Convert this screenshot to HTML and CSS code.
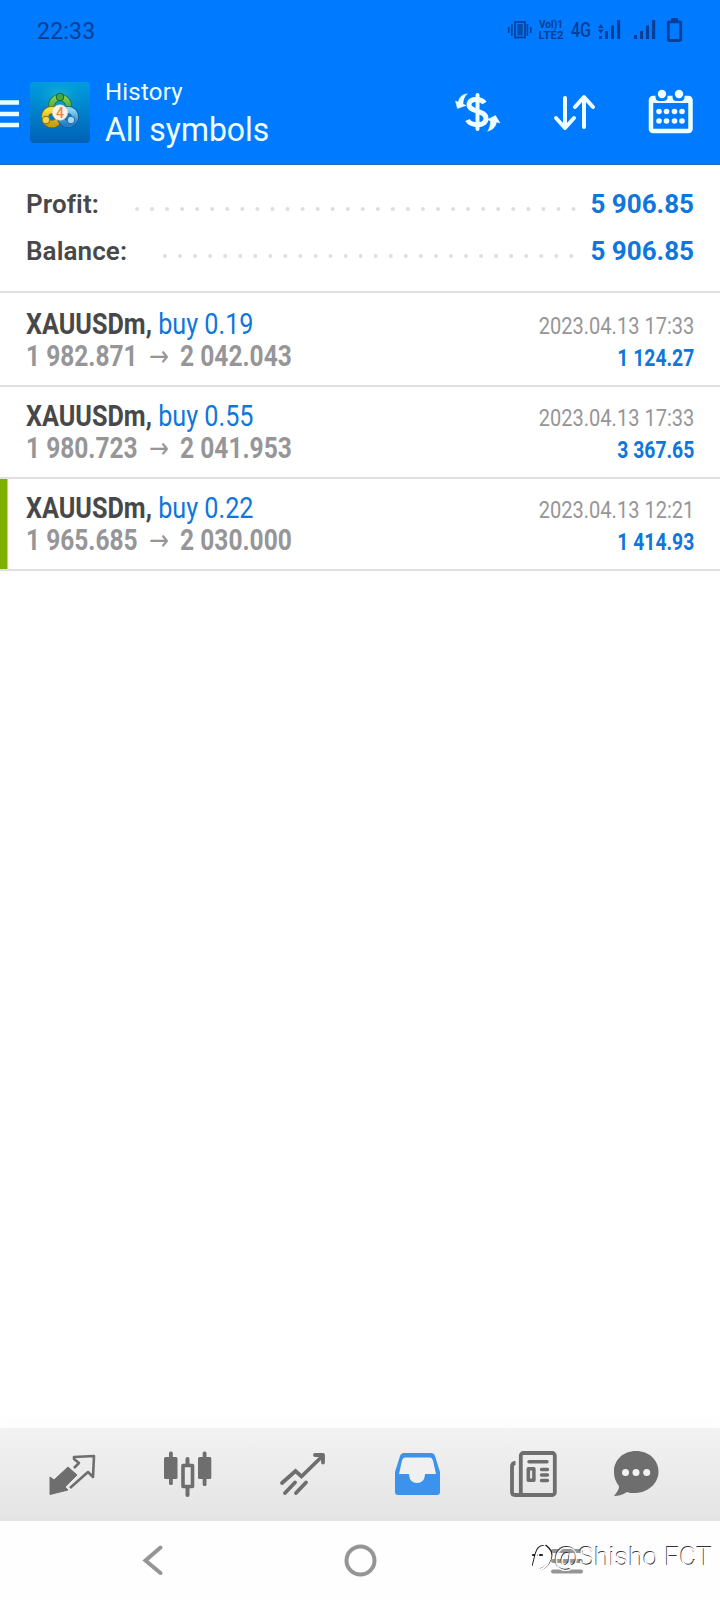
FILE: index.html
```html
<!DOCTYPE html>
<html lang="en">
<head>
<meta charset="utf-8">
<title>History</title>
<link rel="stylesheet" href="styles.css">
</head>
<body>
<header class="header">
  <div class="status">
    <span class="clock">22:33</span>
    <svg class="status-icons" width="186" height="40" viewBox="500 10 186 40" fill="#083f94">
      <g><rect x="508" y="27" width="1.5" height="6"/><rect x="511" y="24" width="1.6" height="12"/><rect x="526.6" y="24" width="1.6" height="12"/><rect x="530" y="27" width="1.5" height="6"/>
      <rect x="515" y="22" width="10" height="15.5" fill="none" stroke="#083f94" stroke-width="1.6"/><rect x="517.3" y="24" width="5.4" height="11.5" opacity=".75"/></g>
      <g font-family="Roboto, sans-serif" font-weight="700" font-size="11.5"><text x="539" y="28" textLength="24" lengthAdjust="spacingAndGlyphs">Vol)1</text><text x="538.5" y="39" textLength="25" lengthAdjust="spacingAndGlyphs">LTE2</text></g>
      <text x="571" y="37" font-family="Roboto, sans-serif" font-weight="500" font-size="20.5" textLength="20" lengthAdjust="spacingAndGlyphs">4G</text>
      <path d="M598 28l2.8-4 2.8 4zM598 29.5l2.8 4 2.8-4zM599 36h3v3h-3zM605 31h3v8h-3zM611 25.500h3v13.500h-3zM617 20h3.200v19h-3.200zM634 35h3v4h-3zM640 31h3v8h-3zM646 25.500h3v13.500h-3zM652 20h3.200v19h-3.200zM671 18h7v3h-7z"/>
      <rect x="668.3" y="21.800" width="12.400" height="18.700" rx="1" fill="none" stroke="#083f94" stroke-width="2.8"/>
    </svg>
  </div>
  <div class="appbar">
    <svg class="menu" width="19" height="28" viewBox="0 0 19 28"><path d="M0 2.500h19M0 14h19M0 25h19" stroke="#e8ffff" stroke-width="4.400"/></svg>
    <svg class="logo" width="60" height="61" viewBox="0 0 60 61">
      <defs>
        <linearGradient id="sea" x1="0" y1="0" x2="0" y2="1"><stop offset="0" stop-color="#009cdf"/><stop offset=".55" stop-color="#007dc9"/><stop offset="1" stop-color="#0060b5"/></linearGradient>
        <radialGradient id="glow"><stop offset="0" stop-color="#21c4d2"/><stop offset="1" stop-color="#0090d5" stop-opacity="0"/></radialGradient>
        <linearGradient id="green" x1="0" y1="0" x2="0" y2="1"><stop offset="0" stop-color="#80ce4e"/><stop offset="1" stop-color="#258e3d"/></linearGradient>
        <linearGradient id="gold" x1="0" y1="0" x2="0" y2="1"><stop offset="0" stop-color="#f5e23c"/><stop offset="1" stop-color="#c99e13"/></linearGradient>
        <linearGradient id="blue" x1="0" y1="0" x2="0" y2="1"><stop offset="0" stop-color="#8bd3f5"/><stop offset="1" stop-color="#237fc9"/></linearGradient>
      </defs>
      <rect width="60" height="61" rx="4" fill="url(#sea)"/>
      <ellipse cx="29" cy="13" rx="29" ry="20" fill="url(#glow)" opacity=".65"/>
      <g fill="none" stroke-linecap="round">
        <circle cx="30" cy="24" r="8.500" stroke="#176a43" stroke-width="7"/><circle cx="30" cy="24" r="8.500" stroke="url(#green)" stroke-width="5.500"/>
        <circle cx="22" cy="35" r="7" stroke="#756b26" stroke-width="8"/><circle cx="22" cy="35" r="7" stroke="url(#gold)" stroke-width="6.500"/>
        <circle cx="38" cy="35" r="7" stroke="#175b91" stroke-width="8"/><circle cx="38" cy="35" r="7" stroke="url(#blue)" stroke-width="6.500"/>
      </g>
      <circle cx="30" cy="15" r="3.800" fill="#45a83f" stroke="#16653a"/><circle cx="16" cy="38" r="3.800" fill="#f1d94b" stroke="#82701b"/><circle cx="41" cy="38" r="3.800" fill="#a0daf5" stroke="#2265a5"/>
      <circle cx="30" cy="30.500" r="7.800" fill="#fff2e6" stroke="#d9c6ad" stroke-width=".6"/>
      <text x="30" y="35.500" text-anchor="middle" font-family="Roboto, sans-serif" font-weight="500" font-size="14" fill="#e98743">4</text>
    </svg>
    <div class="titles"><div class="title">History</div><div class="subtitle">All symbols</div></div>
    <svg class="actions" width="250" height="60" viewBox="450 80 250 60" fill="none" stroke="#efffff" stroke-linecap="round" stroke-linejoin="round">
      <path d="M477.500 95v34" stroke-width="4"/>
      <path d="M484.500 103c-2.500-4-15-6-15.500 1.500s17 5.500 17 14-15.500 7.500-18.500 1.500" stroke-width="5" stroke-linecap="butt"/>
      <path d="M467 94c-5 0-8 4-8.500 8l-3-1 2 7.500 8.500-3-3-1.500c0-4 1-7 4-10z" fill="#efffff" stroke-width=".5"/>
      <path d="M488 131c5-1 8-5 8.500-9l3.500 1-4.500-7.500-8 4 3 1.500c0 4-1 7-2.500 10z" fill="#efffff" stroke-width=".5"/>
      <path d="M565 98v30M556 118l9 10 9-10M584 127V98M575 107l9-10 9 10" stroke-width="4"/>
      <rect x="651" y="98" width="39.500" height="33" rx="2" stroke-width="4.500"/>
      <path d="M651 99h39v4h-39z" fill="#efffff" stroke="none"/>
      <path d="M656 95v3q0 4 4 4h4q4 0 4-4v-3zM673 95v3q0 4 4 4h4q4 0 4-4v-3z" fill="#007aff" stroke="none" transform="translate(-.500 -1)"/>
      <g fill="#efffff" stroke="none"><circle cx="662" cy="94" r="4.200"/><circle cx="679" cy="94" r="4.200"/>
      <circle cx="659" cy="111.500" r="2.800"/><circle cx="666.500" cy="111.500" r="2.800"/><circle cx="674.500" cy="111.500" r="2.800"/><circle cx="682" cy="111.500" r="2.800"/>
      <circle cx="659" cy="121" r="2.800"/><circle cx="666.500" cy="121" r="2.800"/><circle cx="674.500" cy="121" r="2.800"/><circle cx="682" cy="121" r="2.800"/></g>
    </svg>
  </div>
</header>
<main class="content">
  <section class="summary">
    <div class="sum-row"><span class="sum-label">Profit:</span><svg class="dots" width="442" height="6"><path d="M3 3H441" /></svg><span class="sum-value">5 906.85</span></div>
    <div class="sum-row"><span class="sum-label">Balance:</span><svg class="dots dots-balance" width="412" height="6"><path d="M3 3H411" /></svg><span class="sum-value">5 906.85</span></div>
  </section>
  <article class="deal deal-first">
    <div class="deal-info"><div class="symbol"><b>XAUUSDm,</b> <span>buy 0.19</span></div><div class="prices">1 982.871<span class="arrow">→</span>2 042.043</div></div>
    <div class="deal-result"><div class="date">2023.04.13 17:33</div><div class="profit">1 124.27</div></div>
  </article>
  <article class="deal">
    <div class="deal-info"><div class="symbol"><b>XAUUSDm,</b> <span>buy 0.55</span></div><div class="prices">1 980.723<span class="arrow">→</span>2 041.953</div></div>
    <div class="deal-result"><div class="date">2023.04.13 17:33</div><div class="profit">3 367.65</div></div>
  </article>
  <article class="deal deal-marked">
    <div class="deal-info"><div class="symbol"><b>XAUUSDm,</b> <span>buy 0.22</span></div><div class="prices">1 965.685<span class="arrow">→</span>2 030.000</div></div>
    <div class="deal-result"><div class="date">2023.04.13 12:21</div><div class="profit">1 414.93</div></div>
  </article>
</main>
<nav class="tabs">
  <svg width="720" height="93" viewBox="0 1428 720 93" fill="none" stroke="#6e6e6e" stroke-linejoin="round">
    <path d="M68 1467l9 8-12 12 3 3-18 4.500v-17.500l4 3z" fill="#6e6e6e" stroke="#6e6e6e" stroke-width="1"/><path d="M74 1468l5-5-5-4v-2l20-1-1 21-5-5L70 1488" stroke-width="2.600"/>
    <g fill="#6e6e6e" stroke="none"><rect x="164" y="1457" width="13.500" height="22" rx="1.500"/><rect x="169" y="1451.500" width="3.800" height="33.500" rx="1.500"/><rect x="198" y="1457" width="13.300" height="22" rx="1.500"/><rect x="202.700" y="1451.500" width="3.800" height="34.500" rx="1.500"/></g>
    <path d="M187.500 1459v6M187.500 1488v7" stroke-width="4" stroke-linecap="round"/><rect x="183" y="1465.500" width="9.500" height="21" stroke-width="3.600"/>
    <path d="M282 1483l13.500-12 6 5.500 21-20.500M285 1493l10-10.500M296 1493l10-10.500" stroke-width="3.800" stroke-linecap="round" stroke-linejoin="miter"/><path d="M315 1455h8v7.500" stroke-width="3.800" stroke-linecap="round"/>
    <path d="M404 1453h27q3 0 4 3l5 16v20q0 3-3 3h-39q-3 0-3-3v-20l5-16q1-3 4-3z" fill="#3c93ee" stroke="none"/><path d="M405 1457.500h25q2 0 3 3l3 13.500h-11v1q-1 8-8 8t-8-8v-1h-10l3-13.500q1-3 3-3z" fill="#f0f0f0" stroke="none"/>
    <rect x="520.800" y="1453" width="34" height="42" rx="2.500" stroke-width="3.800"/><path d="M515.500 1463q-3.500 0-3.500 4v25q0 3 3 3h9" stroke-width="3.800"/><path d="M529 1461.800h18M541.500 1469.500h6M541.500 1475h6M541.500 1480.500h6" stroke-width="3.400" stroke-linecap="round"/><rect x="528.300" y="1468.700" width="5.600" height="11.500" stroke-width="3.500"/>
    <path d="M636 1451c13 0 22.500 9 22.500 20.500S649 1492 636 1493c-5 0-7 0-9-1-5 3-9 4-13 4 3-4 5-6 5-10-3-4-5-8-5-14.500 0-11.500 9-20.500 22-20.500z" fill="#6e6e6e" stroke="none"/><g fill="#f2f2f2" stroke="none"><circle cx="625.500" cy="1472.500" r="3.500"/><circle cx="636" cy="1472.500" r="3.500"/><circle cx="646.700" cy="1472.500" r="3.500"/></g>
  </svg>
</nav>
<footer class="system">
  <svg width="720" height="79" viewBox="0 1521 720 79" fill="none" stroke="#959595" stroke-width="4">
    <path d="M160.500 1547.500L145.500 1560.500l15 12.500" stroke-linecap="round"/><circle cx="360.500" cy="1560.500" r="14" stroke-width="4"/>
    <path d="M553 1551h28M553 1561h28M553 1571.500h28" stroke-linecap="round"/>
  </svg>
  <div class="watermark"><svg width="22" height="30" viewBox="532 1544 22 30" fill="none" stroke-linecap="round"><path d="M533 1568l3-12q2-7 7-7M533 1558h4M540 1558h2M546 1549q8 6 4 14-3 7-9 9" stroke="#222" stroke-width="2.200"/><path d="M533.800 1568.800l3-12q2-7 7-7M545 1549.800q8 6 4 14-3 7-9 9" stroke="#fff" stroke-width="2.200"/></svg><span>@Shisho FCT</span></div>
</footer>
</body>
</html>
```
FILE: styles.css
```css
* { box-sizing: border-box; }
body { margin: 0; width: 720px; height: 1600px; display: flex; flex-direction: column; overflow: hidden; background: #fff; font-family: Roboto, sans-serif; }
svg { display: block; flex: none; }
.header { height: 165px; background: #007aff; border-bottom: 2px solid #2070bd; flex: none; }
.status { height: 60px; padding: 10px 34px 0 37px; display: flex; justify-content: space-between; }
.clock { font-size: 23px; line-height: 43px; letter-spacing: .2px; color: #083f94; }
.appbar { height: 103px; display: flex; align-items: flex-start; color: #efffff; }
.menu { margin-top: 40px; }
.logo { margin: 22px 0 0 11px; }
.titles { margin: 17px 0 0 15px; width: 345px; white-space: nowrap; }
.title { font-size: 24px; line-height: 30px; letter-spacing: .2px; }
.subtitle { font-size: 33px; line-height: 46px; transform: scaleX(.968); transform-origin: left; }
.actions { margin-top: 20px; }
.content { flex: 1; }
.summary { height: 128px; padding: 15px 26px 0 26px; border-bottom: 2px solid #e0e0e0; }
.sum-row { height: 47px; display: flex; align-items: center; font-size: 26px; line-height: 46px; color: #48484a; }
.sum-label { flex: 1; font-weight: 600; letter-spacing: .1px; }
.sum-value { width: 118px; text-align: right; font-weight: 700; color: #0f76dc; }
.dots { margin-top: 11px; }
.dots path { stroke: #dedede; stroke-width: 4; stroke-linecap: round; stroke-dasharray: 0 15.050; }
.dots-balance { margin-right: 2px; }
.deal { height: 92px; padding: 13px 26px 0 26px; border-bottom: 2px solid #e0e0e0; display: flex; justify-content: space-between; white-space: nowrap; }
.deal-first { height: 94px; padding-top: 15px; }
.deal-marked { background: linear-gradient(#7fb000, #7fb000) 0 0 / 7.500px 100% no-repeat padding-box; }
.deal-info { width: 340px; }
.deal-result { padding-top: 1px; text-align: right; }
.symbol, .prices { transform-origin: left; }
.date, .profit { transform-origin: right; }
.symbol { font-size: 30px; line-height: 32px; color: #0f76dc; transform: scaleX(.84); }
.symbol b { color: #48484a; }
.prices { height: 32px; font-size: 30px; line-height: 32px; font-weight: 700; color: #969698; transform: scaleX(.817); }
.arrow { display: inline-block; width: 52px; text-align: center; font-weight: 400; font-family: "DejaVu Sans", sans-serif; font-size: 29px; line-height: 30px; }
.date { font-size: 24px; line-height: 34px; color: #969698; transform: scaleX(.835); }
.profit { font-size: 24px; line-height: 30px; font-weight: 700; color: #0f76dc; transform: scaleX(.805); }
.tabs { height: 93px; flex: none; background: linear-gradient(#f2f2f2, #e4e4e4); box-shadow: 0 -8px 14px rgba(0,0,0,.015); }
.system { height: 79px; flex: none; background: #fefefe; position: relative; }
.watermark { position: absolute; left: 532px; top: 20px; display: flex; font-size: 26.700px; line-height: 33px; color: #fff; white-space: nowrap; text-shadow: -.7px -.7px .6px #333; font-weight: 300; }
```
